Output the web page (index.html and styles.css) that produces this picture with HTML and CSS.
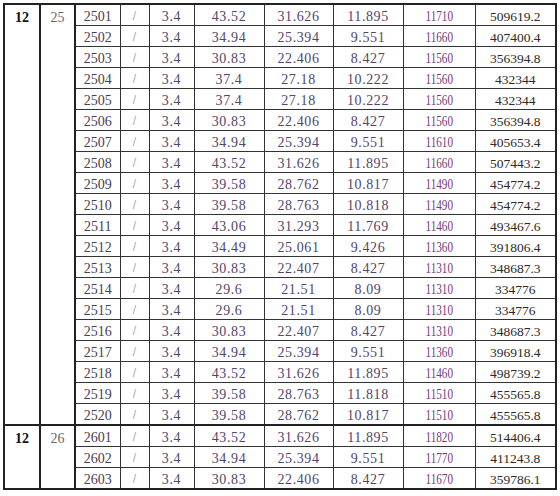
FILE: index.html
```html
<!DOCTYPE html>
<html>
<head>
<meta charset="utf-8">
<link rel="stylesheet" href="styles.css">
</head>
<body>
<div class="wrap">
<table class="grid">
<colgroup>
<col class="c1"><col class="c2"><col class="c3"><col class="c4"><col class="c5"><col class="c6"><col class="c7"><col class="c8"><col class="c9"><col class="c10">
</colgroup>
<tbody class="grp">
<tr><td class="lot" rowspan="20">12</td><td class="sub" rowspan="20">25</td><td class="code">2501</td><td class="sl">/</td><td class="m">3.4</td><td class="m">43.52</td><td class="m">31.626</td><td class="m">11.895</td><td class="p"><span>11710</span></td><td class="t">509619.2</td></tr>
<tr><td class="code">2502</td><td class="sl">/</td><td class="m">3.4</td><td class="m">34.94</td><td class="m">25.394</td><td class="m">9.551</td><td class="p"><span>11660</span></td><td class="t">407400.4</td></tr>
<tr><td class="code">2503</td><td class="sl">/</td><td class="m">3.4</td><td class="m">30.83</td><td class="m">22.406</td><td class="m">8.427</td><td class="p"><span>11560</span></td><td class="t">356394.8</td></tr>
<tr><td class="code">2504</td><td class="sl">/</td><td class="m">3.4</td><td class="m">37.4</td><td class="m">27.18</td><td class="m">10.222</td><td class="p"><span>11560</span></td><td class="t">432344</td></tr>
<tr><td class="code">2505</td><td class="sl">/</td><td class="m">3.4</td><td class="m">37.4</td><td class="m">27.18</td><td class="m">10.222</td><td class="p"><span>11560</span></td><td class="t">432344</td></tr>
<tr><td class="code">2506</td><td class="sl">/</td><td class="m">3.4</td><td class="m">30.83</td><td class="m">22.406</td><td class="m">8.427</td><td class="p"><span>11560</span></td><td class="t">356394.8</td></tr>
<tr><td class="code">2507</td><td class="sl">/</td><td class="m">3.4</td><td class="m">34.94</td><td class="m">25.394</td><td class="m">9.551</td><td class="p"><span>11610</span></td><td class="t">405653.4</td></tr>
<tr><td class="code">2508</td><td class="sl">/</td><td class="m">3.4</td><td class="m">43.52</td><td class="m">31.626</td><td class="m">11.895</td><td class="p"><span>11660</span></td><td class="t">507443.2</td></tr>
<tr><td class="code">2509</td><td class="sl">/</td><td class="m">3.4</td><td class="m">39.58</td><td class="m">28.762</td><td class="m">10.817</td><td class="p"><span>11490</span></td><td class="t">454774.2</td></tr>
<tr><td class="code">2510</td><td class="sl">/</td><td class="m">3.4</td><td class="m">39.58</td><td class="m">28.763</td><td class="m">10.818</td><td class="p"><span>11490</span></td><td class="t">454774.2</td></tr>
<tr><td class="code">2511</td><td class="sl">/</td><td class="m">3.4</td><td class="m">43.06</td><td class="m">31.293</td><td class="m">11.769</td><td class="p"><span>11460</span></td><td class="t">493467.6</td></tr>
<tr><td class="code">2512</td><td class="sl">/</td><td class="m">3.4</td><td class="m">34.49</td><td class="m">25.061</td><td class="m">9.426</td><td class="p"><span>11360</span></td><td class="t">391806.4</td></tr>
<tr><td class="code">2513</td><td class="sl">/</td><td class="m">3.4</td><td class="m">30.83</td><td class="m">22.407</td><td class="m">8.427</td><td class="p"><span>11310</span></td><td class="t">348687.3</td></tr>
<tr><td class="code">2514</td><td class="sl">/</td><td class="m">3.4</td><td class="m">29.6</td><td class="m">21.51</td><td class="m">8.09</td><td class="p"><span>11310</span></td><td class="t">334776</td></tr>
<tr><td class="code">2515</td><td class="sl">/</td><td class="m">3.4</td><td class="m">29.6</td><td class="m">21.51</td><td class="m">8.09</td><td class="p"><span>11310</span></td><td class="t">334776</td></tr>
<tr><td class="code">2516</td><td class="sl">/</td><td class="m">3.4</td><td class="m">30.83</td><td class="m">22.407</td><td class="m">8.427</td><td class="p"><span>11310</span></td><td class="t">348687.3</td></tr>
<tr><td class="code">2517</td><td class="sl">/</td><td class="m">3.4</td><td class="m">34.94</td><td class="m">25.394</td><td class="m">9.551</td><td class="p"><span>11360</span></td><td class="t">396918.4</td></tr>
<tr><td class="code">2518</td><td class="sl">/</td><td class="m">3.4</td><td class="m">43.52</td><td class="m">31.626</td><td class="m">11.895</td><td class="p"><span>11460</span></td><td class="t">498739.2</td></tr>
<tr><td class="code">2519</td><td class="sl">/</td><td class="m">3.4</td><td class="m">39.58</td><td class="m">28.763</td><td class="m">11.818</td><td class="p"><span>11510</span></td><td class="t">455565.8</td></tr>
<tr><td class="code">2520</td><td class="sl">/</td><td class="m">3.4</td><td class="m">39.58</td><td class="m">28.762</td><td class="m">10.817</td><td class="p"><span>11510</span></td><td class="t">455565.8</td></tr>
</tbody>
<tbody class="grp">
<tr><td class="lot" rowspan="3">12</td><td class="sub" rowspan="3">26</td><td class="code">2601</td><td class="sl">/</td><td class="m">3.4</td><td class="m">43.52</td><td class="m">31.626</td><td class="m">11.895</td><td class="p"><span>11820</span></td><td class="t">514406.4</td></tr>
<tr><td class="code">2602</td><td class="sl">/</td><td class="m">3.4</td><td class="m">34.94</td><td class="m">25.394</td><td class="m">9.551</td><td class="p"><span>11770</span></td><td class="t">411243.8</td></tr>
<tr><td class="code">2603</td><td class="sl">/</td><td class="m">3.4</td><td class="m">30.83</td><td class="m">22.406</td><td class="m">8.427</td><td class="p"><span>11670</span></td><td class="t">359786.1</td></tr>
</tbody>
</table>
</div>
</body>
</html>
```
FILE: styles.css
```css
html, body {
  margin: 0;
  padding: 0;
  background: #ffffff;
}
.wrap {
  padding: 3px 0 0 3px;
}
.grid {
  border-collapse: collapse;
  table-layout: fixed;
  width: 553px;
  border: 2px solid #222;
}
.c1 { width: 36px; }
.c2 { width: 35px; }
.c3 { width: 45px; }
.c4 { width: 29px; }
.c5 { width: 45px; }
.c6 { width: 70px; }
.c7 { width: 69px; }
.c8 { width: 70px; }
.c9 { width: 72px; }
.c10 { width: 81px; }
.grp {
  border-top: 2px solid #222;
}
.grid td {
  border: 1px solid #333;
  height: 17px;
  padding: 2px 0 0 0;
  text-align: center;
  vertical-align: middle;
  white-space: nowrap;
  overflow: hidden;
  line-height: 17px;
}
.grid td.lot {
  border-right: 2px solid #222;
  vertical-align: top;
  font-family: "Liberation Serif", serif;
  font-weight: bold;
  font-size: 14px;
  color: #111;
  padding-top: 4px;
}
.grid td.sub {
  border-right: 2px solid #222;
  vertical-align: top;
  font-family: "Liberation Serif", serif;
  font-size: 14px;
  color: #666;
  padding-top: 4px;
}
.code {
  font-family: "Liberation Serif", serif;
  font-size: 14px;
  color: #4a4050;
}
.sl {
  font-family: "Liberation Sans", sans-serif;
  font-size: 12px;
  color: #aaa;
}
.m {
  font-family: "Liberation Serif", serif;
  font-size: 14px;
  letter-spacing: 0.6px;
  color: #54456a;
}
.p span {
  display: inline-block;
  font-family: "Liberation Serif", serif;
  font-size: 14px;
  color: #7a3878;
  transform: scaleX(0.8);
}
.t {
  font-family: "Liberation Serif", serif;
  font-size: 13.5px;
  color: #2e2a26;
}
```
